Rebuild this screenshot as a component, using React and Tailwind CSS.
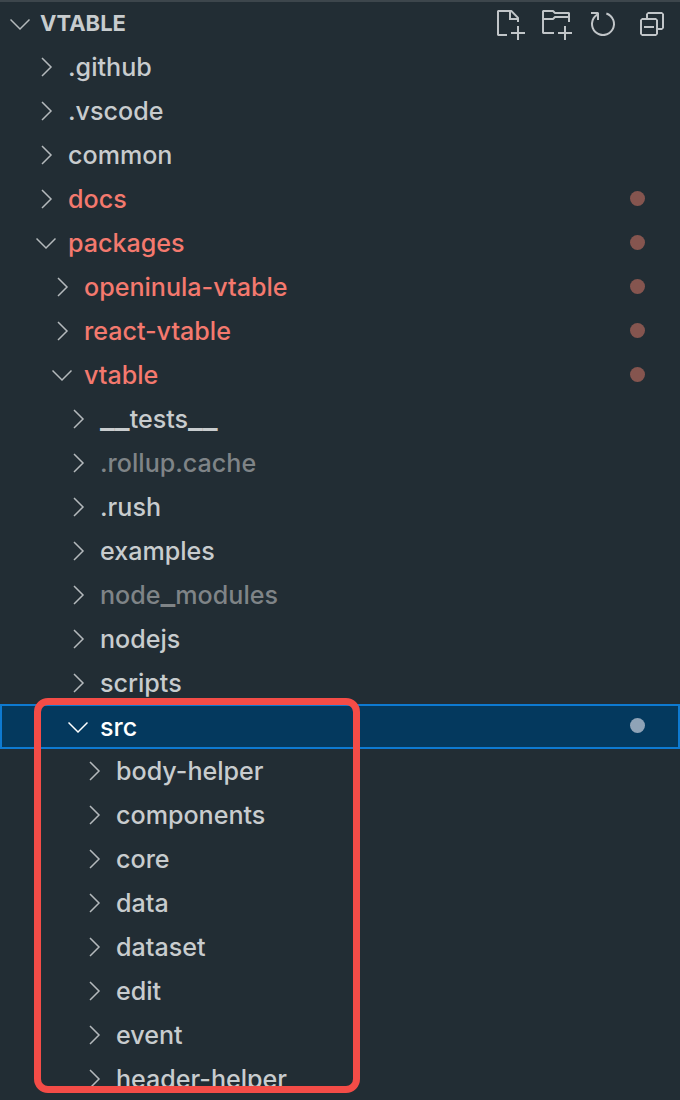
const RED = 'text-[#f4796e]'
const DIM = 'text-[#7f8487]'

const ROWS = [
  { name: '.github', depth: 0 },
  { name: '.vscode', depth: 0 },
  { name: 'common', depth: 0 },
  { name: 'docs', depth: 0, color: RED, dot: true },
  { name: 'packages', depth: 0, open: true, color: RED, dot: true },
  { name: 'openinula-vtable', depth: 1, color: RED, dot: true },
  { name: 'react-vtable', depth: 1, color: RED, dot: true },
  { name: 'vtable', depth: 1, open: true, color: RED, dot: true },
  { name: '__tests__', depth: 2 },
  { name: '.rollup.cache', depth: 2, color: DIM },
  { name: '.rush', depth: 2 },
  { name: 'examples', depth: 2 },
  { name: 'node_modules', depth: 2, color: DIM },
  { name: 'nodejs', depth: 2 },
  { name: 'scripts', depth: 2 },
  { name: 'src', depth: 2, open: true, selected: true, dot: true },
  { name: 'body-helper', depth: 3 },
  { name: 'components', depth: 3 },
  { name: 'core', depth: 3 },
  { name: 'data', depth: 3 },
  { name: 'dataset', depth: 3 },
  { name: 'edit', depth: 3 },
  { name: 'event', depth: 3 },
  { name: 'header-helper', depth: 3 },
]

const INDENT = ['pl-[34px]', 'pl-[50px]', 'pl-[66px]', 'pl-[82px]']

const TOOLBAR = [
  'M9.5 1.1l3.4 3.5.1.4v2h-1V6H8V2H3v11h4v1H2.5l-.5-.5v-12l.5-.5h6.7l.3.1zM9 2v3h2.9L9 2zm4 14h-1v-3H9v-1h3V9h1v3h3v1h-3v3z',
  'M14.5 2H7.71l-.85-.85L6.51 1h-5l-.5.5v11l.5.5H7v-1H2V6h4.5l.35-.15L7.71 5H14v2h1V2.5l-.5-.5zM14 4H7.5l-.35.15-.86.85H2V2h4.29l.85.85.36.15H14v1zM13 16h-1v-3H9v-1h3V9h1v3h3v1h-3v3z',
  'M4.681 3H2V2h3.5l.5.5V6H5V4a5 5 0 1 0 4.53-.761l.302-.954A6 6 0 1 1 4.681 3z',
  'M9 9H4v1h5V9zM5 3l1-1h7l1 1v7l-1 1h-2v2l-1 1H3l-1-1V6l1-1h2V3zm1 2h4l1 1v4h2V3H6v2zm4 1H3v7h7V6z',
]

function Chevron({ open, className }) {
  return (
    <svg width="20" height="20" viewBox="0 0 20 20" fill="none" stroke="currentColor" strokeWidth="1.5" className={className}>
      {open ? <path d="M.5 5.5L10 15l9.5-9.5" /> : <path d="M6 1l9 9-9 9" />}
    </svg>
  )
}

function ToolIcons() {
  return (
    <div className="flex items-center gap-[15px] text-[#c1c5c8]">
      {TOOLBAR.map((d, i) => (
        <svg key={i} width="32" height="32" viewBox="0 0 16 16" fill="currentColor" fillRule="evenodd" className={i === 3 ? 'ml-[2px]' : ''}>
          <path d={d} />
        </svg>
      ))}
    </div>
  )
}

// the underscores are wider in the reference font
function Name({ text }) {
  return text.split(/(_+)/).map((part, i) =>
    part[0] === '_' ? <span key={i} className="text-[32px] leading-[0]">{part}</span> : part
  )
}

function Row({ row }) {
  const base = row.selected
    ? '-mt-px h-[45px] bg-[#04395e] border-2 border-[#0e7ad1] text-white'
    : `h-11 border-2 border-transparent ${row.color || 'text-[#c8ccce]'}`
  return (
    <div className={`flex items-center pr-[33px] ${INDENT[row.depth]} ${base}`}>
      <Chevron open={row.open} className={`shrink-0 ${row.selected ? 'text-white' : 'text-[#b4b9bc]'}`} />
      <span className="mt-[2px] ml-[12px] text-[25.1px] leading-none font-[450] whitespace-nowrap">
        <Name text={row.name} />
      </span>
      {row.dot && (
        <span className={`mb-[2px] ml-auto h-[15px] w-[15px] rounded-full ${row.selected ? 'bg-[#8fa3b7]' : 'bg-[#85554f]'}`} />
      )}
    </div>
  )
}

export default function App() {
  return (
    <div className="relative h-[1100px] w-[680px] overflow-hidden bg-[#222d34] font-['Inter',sans-serif]">
      <div className="h-[2px] bg-[#3d464c]" />
      <div className="flex h-[43px] items-center justify-between pl-[10px] pr-[12px]">
        <div className="flex items-center text-[#c8ccce]">
          <Chevron open className="shrink-0 text-[#b4b9bc]" />
          <span className="mb-[2px] ml-[10px] text-[22px] leading-none font-bold">VTABLE</span>
        </div>
        <ToolIcons />
      </div>
      <div className="h-[1041px] overflow-hidden">
        {ROWS.map(row => (
          <Row key={row.name} row={row} />
        ))}
      </div>
      {/* red annotation frame drawn over the tree */}
      <div className="absolute top-[698px] left-[34px] h-[395px] w-[326px] rounded-[14px] border-[7px] border-[#f44c47]" />
    </div>
  )
}
